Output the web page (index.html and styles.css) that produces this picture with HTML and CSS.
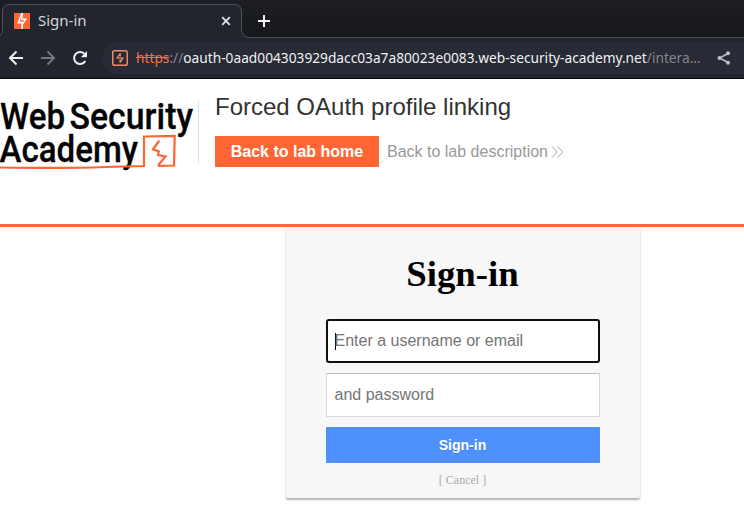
FILE: index.html
```html
<!DOCTYPE html>
<html lang="en">
<head>
<meta charset="utf-8">
<title>Sign-in</title>
<link rel="stylesheet" href="styles.css">
</head>
<body>
<div class="browser">
  <div class="tabs">
    <svg class="tab-shape" width="260" height="38" viewBox="0 0 260 38"><path d="M-6 37.500C0 37.500 2.500 34 2.500 29V12Q2.500 4.500 10 4.500H234Q241.500 4.500 241.500 12V29Q241.500 37.500 250 37.500V39H-6Z"/></svg>
    <div class="tab">
      <svg class="favicon" width="16" height="16" viewBox="0 0 16 16"><path fill="#ff6633" d="M0 0h16v16H0z"/><path fill="#fff" d="M7.200 0H9.200L8.400 5.600H13L9 11.500V16H7.300V10.400H3.200z"/><path fill="#ff6633" d="M7 4.500 5.300 8.400H8.300L8.600 9.500 10.500 7.200H7z"/></svg>
      <span class="tab-title">Sign-in</span>
      <svg class="close" width="10" height="10" viewBox="0 0 10 10"><path d="m1.200 1.200 7.600 7.600m0-7.600L1.200 8.800"/></svg>
    </div>
    <svg class="plus" width="12" height="12" viewBox="0 0 12 12"><path d="M6 0v12M0 6h12"/></svg>
  </div>
  <div class="toolbar">
    <svg class="nav" width="16" height="16" viewBox="0 0 16 16"><path d="M15 8H2m6.500-6.500L2 8l6.500 6.500"/></svg>
    <svg class="nav dim" width="16" height="16" viewBox="0 0 16 16"><path d="M1 8h13M7.500 1.500 14 8l-6.500 6.500"/></svg>
    <svg class="nav" width="16" height="16" viewBox="0 0 16 16"><path d="M13.300 11A6 6 0 1 1 12.300 3.700"/><path class="solid" d="M15 1v6.200H8.800z"/></svg>
    <div class="address">
      <svg class="site" width="16" height="16" viewBox="0 0 16 16"><rect x=".75" y=".75" width="14.500" height="14.500" rx="1.800"/><path class="bolt" d="M8.300 3.300 5 7.800H8M8 12.700 11 8.200H8M8.300 3.300V6.500M8 12.700V9.500"/></svg>
      <span class="url"><s>https</s><i>://</i>oauth-0aad004303929dacc03a7a80023e0083.web-security-academy.net<i>/intera…</i></span>
      <svg class="share" width="14" height="14" viewBox="0 0 14 14"><path d="M11 2.500 2.500 7l8.500 4.500"/><circle cx="11" cy="2.300" r="2"/><circle cx="2.500" cy="7" r="2"/><circle cx="11" cy="11.700" r="2"/></svg>
    </div>
  </div>
</div>
<header class="lab">
  <svg class="logo" width="198" height="80" viewBox="0 0 198 80">
    <text x="0" y="38.300" textLength="65" lengthAdjust="spacingAndGlyphs">Web</text>
    <text x="69.500" y="38.300" textLength="123.500" lengthAdjust="spacingAndGlyphs">Security</text>
    <text x="-.5" y="71" textLength="138.500" lengthAdjust="spacingAndGlyphs">Academy</text>
    <path d="M0 76.500C40 77.200 80 77 105 76L144 75V45.500L174.700 44.800L174 74.500L158 74.800"/>
    <path d="M159.300 49.500 153 58.500 158.800 60.300 158 64 165.500 65.500 158 74.500"/>
  </svg>
  <div class="lab-info">
    <h2>Forced OAuth profile linking</h2>
    <div class="links">
      <a class="home">Back to lab home</a>
      <a class="desc">Back to lab description</a>
      <svg width="13" height="12" viewBox="0 0 13 12"><path d="m1 .5 5.300 5.500L1 11.500M6.500.5 11.800 6l-5.300 5.500"/></svg>
    </div>
  </div>
</header>
<main class="card">
  <h1>Sign-in</h1>
  <div class="field focused"><span class="caret"></span>Enter a username or email</div>
  <div class="field">and password</div>
  <button class="submit">Sign-in</button>
  <div class="cancel">[ Cancel ]</div>
</main>
</body>
</html>
```
FILE: styles.css
```css
* { box-sizing: border-box; }
body { margin: 0; background: #fff; height: 507px; overflow: hidden; font-family: "Liberation Sans", Arial, sans-serif; }
svg { display: block; flex: none; fill: none; }
.browser { height: 79px; background: #22242e; border-bottom: 1px solid #07080c; font-family: "Noto Sans", sans-serif; }
.tabs { position: relative; height: 38px; display: flex; align-items: center; padding-top: 4px; background: linear-gradient(#1c1e24, #17181c); border-bottom: 1px solid #4b4d54; }
.tab-shape { position: absolute; left: 0; top: 0; }
.tab-shape path { fill: #22242e; stroke: #50525a; }
.tab { position: relative; width: 242px; display: flex; align-items: center; padding: 0 11px 0 14px; }
.tab-title { margin: -1px 0 0 8px; flex: 1; font-size: 15px; line-height: 20px; color: #d5d6d8; }
.close { stroke: #e2e2e2; stroke-width: 1.800; }
.plus { margin-left: 16px; stroke: #f2f2f2; stroke-width: 2; }
.toolbar { height: 40px; display: flex; align-items: center; padding-left: 8px; gap: 16px; }
.nav { stroke: #f0f0ee; stroke-width: 2; }
.nav .solid { fill: #f0f0ee; stroke: none; }
.dim { stroke: #77787d; }
.address { height: 32px; width: 660px; margin-left: -2px; flex: none; display: flex; align-items: center; padding-left: 10px; border-radius: 16px 0 0 16px; background: #282a35; }
.site { stroke: #f18a67; stroke-width: 1.500; }
.bolt { stroke-width: 1.200; }
.url { margin-left: 8px; width: 581px; font-size: 13.720px; line-height: 20px; color: #f0f1f3; white-space: nowrap; }
.url s { color: #e77350; }
.url i { font-style: normal; color: #85878e; }
.share { stroke: #c0c0c2; stroke-width: 1.500; }
.share circle { fill: #c0c0c2; stroke: none; }
.lab { height: 148px; border-bottom: 3px solid #ff6633; display: flex; align-items: flex-start; padding-top: 12px; }
.logo { font-family: Roboto, sans-serif; font-size: 37px; font-weight: 500; }
.logo text { fill: #050505; stroke: #050505; stroke-width: .3; }
.logo path { stroke: #ff6633; stroke-width: 2.200; }
.lab-info { margin-top: 10px; height: 62px; padding-left: 16px; border-left: 1px solid #ddd; }
h2 { margin: -9px 0 0; font-size: 24px; line-height: 30px; font-weight: 400; color: #333332; white-space: nowrap; }
.links { display: flex; align-items: center; margin-top: 14px; font-size: 16px; line-height: 31px; }
.home { width: 164px; height: 31px; text-align: center; background: #ff6633; color: #fff; font-weight: 700; }
.desc { margin: 0 3px 0 8px; color: #999; }
.links path { stroke: #999; stroke-width: .9; }
.card { width: 354px; height: 271px; margin-left: 286px; padding: 26px 40px 0; background: #f7f7f7; border-radius: 2px; box-shadow: 0 2px 2px rgba(0,0,0,.3); }
h1 { margin: 0 1px 25px 0; text-align: center; font: 700 36.800px/41px "Liberation Serif", serif; color: #000; }
.field { height: 44px; margin-bottom: 10px; padding: 0 7.500px; border: 1px solid #d9d9d9; border-top-color: #c0c0c0; background: #fff; color: #757575; font-size: 16px; line-height: 42px; }
.focused { display: flex; align-items: center; border: 2px solid #101010; border-radius: 3px; padding-left: 7px; line-height: 40px; }
.caret { width: 1px; height: 17px; margin-right: -1.500px; background: #000; }
.submit { display: block; width: 100%; height: 36px; border: 0; padding: 0 1px 0 0; background: #4d90fe; color: #fff; font: 700 14px/36px "Liberation Sans", Arial, sans-serif; text-shadow: 0 1px rgba(0,0,0,.1); }
.cancel { margin: 10px 1px 0 0; text-align: center; font: 12px/14px "Liberation Serif", serif; color: #aaa; }
```
